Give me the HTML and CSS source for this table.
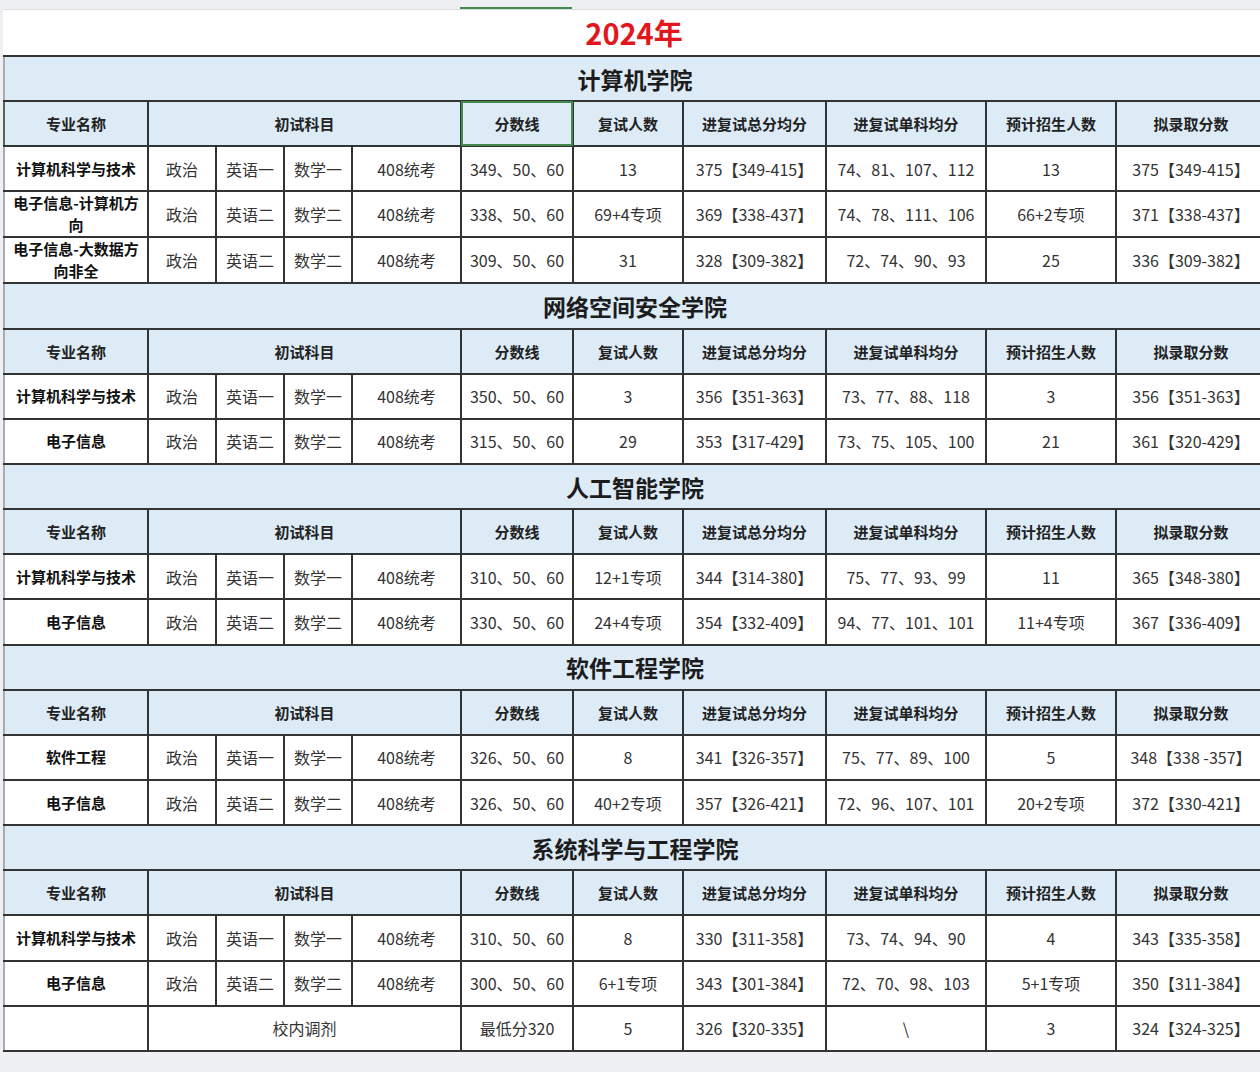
FILE: index.html
```html
<!DOCTYPE html>
<html lang="zh-CN">
<head>
<meta charset="utf-8">
<title>2024年</title>
<link rel="stylesheet" href="styles.css">
</head>
<body>
<div class="page">
  <div class="colbar"><span class="sel"></span></div>
  <div class="sheet">
    <div class="title">2024年</div>
    <table class="grid">
      <colgroup>
        <col class="w-name"><col class="w-sub"><col class="w-sub"><col class="w-sub"><col class="w-408"><col class="w-line"><col class="w-num"><col class="w-avg"><col class="w-single"><col class="w-plan"><col class="w-final">
      </colgroup>
      <tbody>
        <tr class="college"><td colspan="11">计算机学院</td></tr>
        <tr class="head"><th class="first sel-left">专业名称</th><th colspan="4">初试科目</th><th class="sel-cell">分数线</th><th>复试人数</th><th>进复试总分均分</th><th>进复试单科均分</th><th>预计招生人数</th><th>拟录取分数</th></tr>
        <tr class="data"><td class="name">计算机科学与技术</td><td>政治</td><td>英语一</td><td>数学一</td><td>408统考</td><td>349、50、60</td><td>13</td><td>375【349-415】</td><td>74、81、107、112</td><td>13</td><td>375【349-415】</td></tr>
        <tr class="data"><td class="name">电子信息-计算机方向</td><td>政治</td><td>英语二</td><td>数学二</td><td>408统考</td><td>338、50、60</td><td>69+4专项</td><td>369【338-437】</td><td>74、78、111、106</td><td>66+2专项</td><td>371【338-437】</td></tr>
        <tr class="data"><td class="name">电子信息-大数据方向非全</td><td>政治</td><td>英语二</td><td>数学二</td><td>408统考</td><td>309、50、60</td><td>31</td><td>328【309-382】</td><td>72、74、90、93</td><td>25</td><td>336【309-382】</td></tr>

        <tr class="college"><td colspan="11">网络空间安全学院</td></tr>
        <tr class="head"><th class="first">专业名称</th><th colspan="4">初试科目</th><th>分数线</th><th>复试人数</th><th>进复试总分均分</th><th>进复试单科均分</th><th>预计招生人数</th><th>拟录取分数</th></tr>
        <tr class="data"><td class="name">计算机科学与技术</td><td>政治</td><td>英语一</td><td>数学一</td><td>408统考</td><td>350、50、60</td><td>3</td><td>356【351-363】</td><td>73、77、88、118</td><td>3</td><td>356【351-363】</td></tr>
        <tr class="data"><td class="name">电子信息</td><td>政治</td><td>英语二</td><td>数学二</td><td>408统考</td><td>315、50、60</td><td>29</td><td>353【317-429】</td><td>73、75、105、100</td><td>21</td><td>361【320-429】</td></tr>

        <tr class="college"><td colspan="11">人工智能学院</td></tr>
        <tr class="head"><th class="first">专业名称</th><th colspan="4">初试科目</th><th>分数线</th><th>复试人数</th><th>进复试总分均分</th><th>进复试单科均分</th><th>预计招生人数</th><th>拟录取分数</th></tr>
        <tr class="data"><td class="name">计算机科学与技术</td><td>政治</td><td>英语一</td><td>数学一</td><td>408统考</td><td>310、50、60</td><td>12+1专项</td><td>344【314-380】</td><td>75、77、93、99</td><td>11</td><td>365【348-380】</td></tr>
        <tr class="data"><td class="name">电子信息</td><td>政治</td><td>英语二</td><td>数学二</td><td>408统考</td><td>330、50、60</td><td>24+4专项</td><td>354【332-409】</td><td>94、77、101、101</td><td>11+4专项</td><td>367【336-409】</td></tr>

        <tr class="college"><td colspan="11">软件工程学院</td></tr>
        <tr class="head"><th class="first">专业名称</th><th colspan="4">初试科目</th><th>分数线</th><th>复试人数</th><th>进复试总分均分</th><th>进复试单科均分</th><th>预计招生人数</th><th>拟录取分数</th></tr>
        <tr class="data"><td class="name">软件工程</td><td>政治</td><td>英语一</td><td>数学一</td><td>408统考</td><td>326、50、60</td><td>8</td><td>341【326-357】</td><td>75、77、89、100</td><td>5</td><td>348【338 -357】</td></tr>
        <tr class="data"><td class="name">电子信息</td><td>政治</td><td>英语二</td><td>数学二</td><td>408统考</td><td>326、50、60</td><td>40+2专项</td><td>357【326-421】</td><td>72、96、107、101</td><td>20+2专项</td><td>372【330-421】</td></tr>

        <tr class="college"><td colspan="11">系统科学与工程学院</td></tr>
        <tr class="head"><th class="first">专业名称</th><th colspan="4">初试科目</th><th>分数线</th><th>复试人数</th><th>进复试总分均分</th><th>进复试单科均分</th><th>预计招生人数</th><th>拟录取分数</th></tr>
        <tr class="data"><td class="name">计算机科学与技术</td><td>政治</td><td>英语一</td><td>数学一</td><td>408统考</td><td>310、50、60</td><td>8</td><td>330【311-358】</td><td>73、74、94、90</td><td>4</td><td>343【335-358】</td></tr>
        <tr class="data"><td class="name">电子信息</td><td>政治</td><td>英语二</td><td>数学二</td><td>408统考</td><td>300、50、60</td><td>6+1专项</td><td>343【301-384】</td><td>72、70、98、103</td><td>5+1专项</td><td>350【311-384】</td></tr>
        <tr class="data"><td class="name"></td><td colspan="4">校内调剂</td><td>最低分320</td><td>5</td><td>326【320-335】</td><td>\</td><td>3</td><td>324【324-325】</td></tr>
      </tbody>
    </table>
  </div>
</div>
</body>
</html>
```

FILE: styles.css
```css
html, body {
  margin: 0;
  padding: 0;
}

body {
  background: #eef0f4;
  font-family: "Noto Sans CJK SC", "Noto Sans", sans-serif;
  width: 1260px;
  height: 1072px;
  overflow: hidden;
}

.page {
  margin-left: 3px;
  width: 1262px;
}

.colbar {
  height: 10px;
  padding-left: 457px;
  box-sizing: border-box;
  display: flex;
  align-items: flex-end;
  border-bottom: 1px solid #d9dbe0;
}

.colbar .sel {
  display: block;
  width: 112px;
  height: 2px;
  background: #3f8a4c;
}

.sheet {
  background: #ffffff;
}

.title {
  height: 45px;
  line-height: 45px;
  text-align: center;
  color: #e2161d;
  font-weight: 700;
  font-size: 29px;
}

.grid {
  border-collapse: collapse;
  table-layout: fixed;
  width: 1262px;
}

.w-name { width: 144px; }
.w-sub { width: 68px; }
.w-408 { width: 109px; }
.w-line { width: 112px; }
.w-num { width: 110px; }
.w-avg { width: 143px; }
.w-single { width: 160px; }
.w-plan { width: 130px; }
.w-final { width: 150px; }

.grid td,
.grid th {
  border: 2px solid #333;
  padding: 0 4px;
  text-align: center;
  vertical-align: middle;
  height: 45.15px;
  box-sizing: border-box;
}

.grid tr > :first-child {
  border-left-color: #a9adb3;
}

.college td {
  background: #ddebf7;
  color: #1c1c1c;
  font-size: 23px;
  font-weight: 700;
  border-left-color: #a9adb3;
}

.head th {
  background: #ddebf7;
  color: #222;
  font-size: 15px;
  font-weight: 700;
}

.head th.sel-left {
  border-left-color: #4d6b52;
}

.head th.sel-cell {
  outline: 2px solid #3f8a4c;
  outline-offset: -2px;
}

.data td {
  background: #ffffff;
  color: #333;
  font-size: 16px;
  white-space: nowrap;
}

.data td.name {
  color: #111;
  font-size: 15px;
  font-weight: 700;
  line-height: 22px;
  white-space: normal;
}
```
